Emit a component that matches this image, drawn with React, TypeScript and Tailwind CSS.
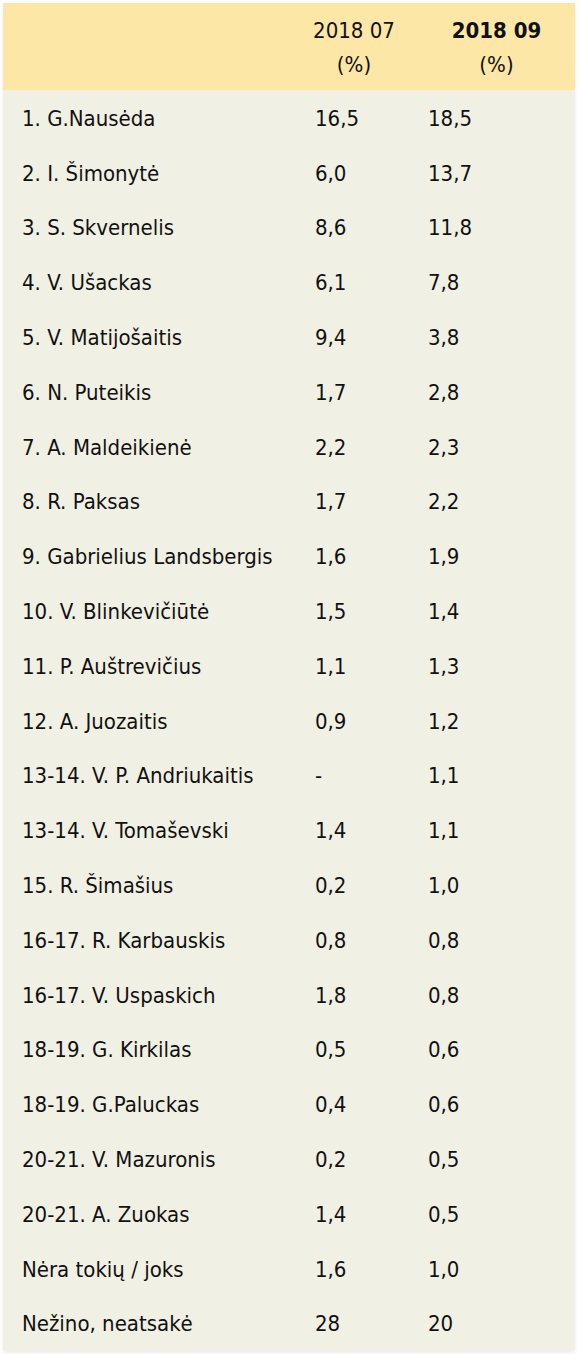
import React from "react";

// Poll results table: candidate ratings in two survey waves
const rows: [string, string, string][] = [
  ["1. G.Nausėda", "16,5", "18,5"],
  ["2. I. Šimonytė", "6,0", "13,7"],
  ["3. S. Skvernelis", "8,6", "11,8"],
  ["4. V. Ušackas", "6,1", "7,8"],
  ["5. V. Matijošaitis", "9,4", "3,8"],
  ["6. N. Puteikis", "1,7", "2,8"],
  ["7. A. Maldeikienė", "2,2", "2,3"],
  ["8. R. Paksas", "1,7", "2,2"],
  ["9. Gabrielius Landsbergis", "1,6", "1,9"],
  ["10. V. Blinkevičiūtė", "1,5", "1,4"],
  ["11. P. Auštrevičius", "1,1", "1,3"],
  ["12. A. Juozaitis", "0,9", "1,2"],
  ["13-14. V. P. Andriukaitis", "-", "1,1"],
  ["13-14. V. Tomaševski", "1,4", "1,1"],
  ["15. R. Šimašius", "0,2", "1,0"],
  ["16-17. R. Karbauskis", "0,8", "0,8"],
  ["16-17. V. Uspaskich", "1,8", "0,8"],
  ["18-19. G. Kirkilas", "0,5", "0,6"],
  ["18-19. G.Paluckas", "0,4", "0,6"],
  ["20-21. V. Mazuronis", "0,2", "0,5"],
  ["20-21. A. Zuokas", "1,4", "0,5"],
  ["Nėra tokių / joks", "1,6", "1,0"],
  ["Nežino, neatsakė", "28", "20"],
];

export default function App() {
  return (
    <div className="bg-white w-[580px] min-h-[1354px] pt-[3px] pl-[3px]">
      <div className="w-[572px] bg-[#f1f0e4] text-[#111] text-[22px] font-['DejaVu_Sans_Condensed',sans-serif] shadow-[0_3px_4px_rgba(0,0,0,0.08)]">
        <div className="grid grid-cols-[295px_112px_1fr] h-[87px] bg-[#fde7a6] items-center leading-[34px]">
          <div />
          <div className="text-center pt-[3px]">
            2018 07
            <br />
            (%)
          </div>
          <div className="text-center pl-[8px] pt-[3px]">
            <span className="font-bold">2018 09</span>
            <br />
            (%)
          </div>
        </div>
        {rows.map(([name, a, b]) => (
          <div
            key={name}
            className="grid grid-cols-[295px_112px_1fr] h-[54.8px] items-center pt-[2px]"
          >
            <div className="pl-[19px] whitespace-nowrap">{name}</div>
            <div className="pl-[17px]">{a}</div>
            <div className="pl-[18px]">{b}</div>
          </div>
        ))}
      </div>
    </div>
  );
}
